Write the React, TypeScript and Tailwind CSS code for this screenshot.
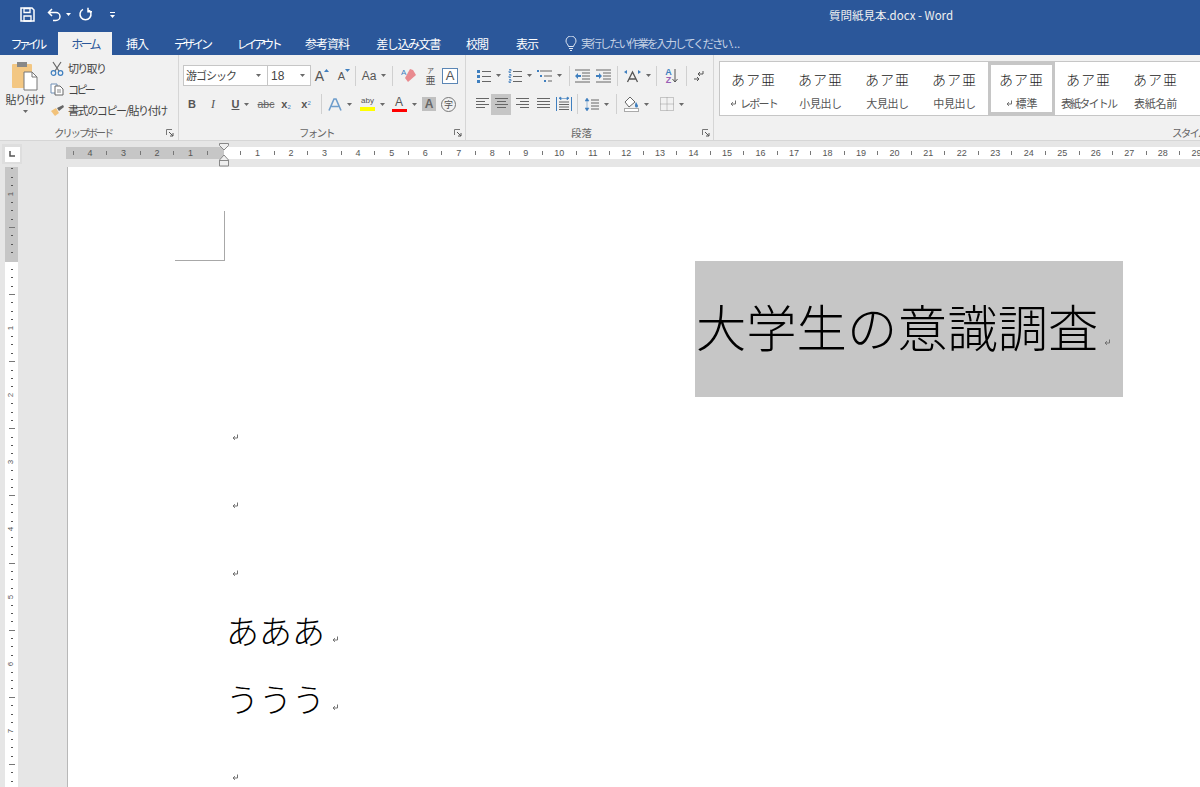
import React from "react";

const JP = "font-['Noto_Sans_CJK_JP',sans-serif]";
const B = "#3f7fbf";

const Caret = ({ c = "#6a6a6a" }: { c?: string }) => (
  <svg width="5" height="3" viewBox="0 0 5 3" className="flex-none"><path d="M0 0h5L2.5 3z" fill={c} /></svg>
);
const Sep = ({ h = "h-[20px]" }: { h?: string }) => <div className={`w-px flex-none bg-[#d0d0d0] ${h}`} />;

const Launcher = () => (
  <svg width="8" height="8" viewBox="0 0 8 8" className="flex-none">
    <path d="M.5 6V.5H6" fill="none" stroke="#777" />
    <path d="M3 3l4 4M7 4v3H4" fill="none" stroke="#555" />
  </svg>
);

const Lines = ({ rows }: { rows: [number, number][] }) => (
  <svg width="15" height="14" viewBox="0 0 15 14">
    {rows.map(([x, w], i) => (
      <rect key={i} x={x} y={1 + i * 3} width={w} height="1" fill="#666" />
    ))}
  </svg>
);

const Bullets = () => (
  <svg width="14" height="14" viewBox="0 0 14 14">
    {[2, 7, 12].map((y) => (
      <g key={y}>
        <rect x="0" y={y - 1} width="3" height="3" fill={B} />
        <rect x="5" y={y} width="9" height="1" fill="#666" />
      </g>
    ))}
  </svg>
);

const Numbers = () => (
  <svg width="14" height="14" viewBox="0 0 14 14">
    {[2, 7, 12].map((y) => (
      <g key={y}>
        <path d={`M1 ${y - 1.5}h2v1.500H1v1.500h2`} fill="none" stroke={B} strokeWidth=".8" />
        <rect x="5" y={y} width="9" height="1" fill="#666" />
      </g>
    ))}
  </svg>
);

const Multi = () => (
  <svg width="15" height="14" viewBox="0 0 15 14">
    <rect x="0" y="1" width="2" height="2" fill={B} />
    <rect x="3" y="1.500" width="12" height="1" fill="#666" />
    <rect x="3" y="6" width="2" height="2" fill={B} />
    <rect x="7" y="6.500" width="8" height="1" fill="#666" />
    <rect x="7" y="11" width="2" height="2" fill={B} />
    <rect x="11" y="11.500" width="4" height="1" fill="#666" />
  </svg>
);

const Indent = ({ flip }: { flip?: boolean }) => (
  <svg width="15" height="14" viewBox="0 0 15 14">
    <path d="M0 1h15M7 4h8M7 7h8M7 10h8M0 13h15" stroke="#666" />
    <path d={flip ? "M6 7 3 4v2H0v2h3v2z" : "M0 7l3-3v2h3v2H3v2z"} fill={B} />
  </svg>
);

const Txt = ({ c, cls }: { c: string; cls: string }) => (
  <span className={`font-['Liberation_Sans',sans-serif] leading-none ${cls}`}>{c}</span>
);

const Cell = ({ w, children }: { w: string; children?: React.ReactNode }) => (
  <div className={`flex flex-none items-center justify-center gap-[5px] ${w}`}>{children}</div>
);

function rulerSeq(n: number) {
  const items = [];
  for (let i = 1; i <= n; i++) {
    items.push(
      <div key={"t" + i} className="flex w-[16.77px] flex-none justify-center"><div className="h-[4px] w-px bg-[#777]" /></div>,
      <div key={"n" + i} className="flex w-[16.77px] flex-none justify-center font-['Liberation_Sans',sans-serif] text-[9px] leading-none text-[#555]">{i}</div>
    );
  }
  return items;
}

function vruler(k: number) {
  const m = ((k % 8) + 8) % 8;
  const num = Math.abs(k) / 8;
  return (
    <div key={k} className="flex h-[8.4px] flex-none items-center justify-center">
      {m === 0 ? (
        <span className="-rotate-90 font-['Liberation_Sans',sans-serif] text-[8px] leading-none text-[#555]">{num}</span>
      ) : m === 4 ? (
        <div className="h-px w-[6px] bg-[#777]" />
      ) : (
        <div className="h-px w-[2px] bg-[#555]" />
      )}
    </div>
  );
}

const Mark = () => (
  <svg width="7" height="7" viewBox="0 0 7 7" className="flex-none">
    <path d="M5.5 .5v3.5H1.2M3 2.2 1 4l2 1.8" fill="none" stroke="#707070" strokeWidth="1" />
  </svg>
);

const Tab = ({ w, t, active, track = "" }: { w: string; t: string; active?: boolean; track?: string }) => (
  <div className={`flex h-[23px] flex-none items-center justify-center text-[12px] ${w} ${track} ${active ? "bg-[#f1f1f1] text-[#2b579a]" : "text-white"}`}>{t}</div>
);

const Style = ({ t, sel, mark, track }: { t: string; sel?: boolean; mark?: boolean; track: string }) => (
  <div className={`flex h-[53px] w-[67px] flex-none flex-col items-center ${sel ? "border-[3px] border-[#c6c6c6] pt-[4px]" : "pt-[7px]"}`}>
    <div className="text-[14px] font-light leading-[20px] tracking-[1px] text-[#222]">あア亜</div>
    <div className={`mt-[6px] flex items-center gap-[3px] whitespace-nowrap text-[11px] leading-[16px] text-[#555] ${track}`}>
      {mark && <Mark />}
      {t}
    </div>
  </div>
);

export default function App() {
  return (
    <div className={`flex h-[787px] w-[1200px] flex-col overflow-hidden bg-[#e6e6e6] ${JP}`}>
      {/* title bar */}
      <div className="flex h-[32px] flex-none items-center bg-[#2b579a]">
        <div className="flex w-[582px] flex-none items-center pb-[3px] pl-[20px]">
          <svg width="15" height="15" viewBox="0 0 15 15"><path d="M1 1h11l2 2v11H1z" fill="none" stroke="#fff" strokeWidth="1.5" /><path d="M4 1.500h6v4H4zM4 9h7v5H4z" fill="none" stroke="#fff" strokeWidth="1.300" /></svg>
          <svg width="15" height="14" viewBox="0 0 15 14" className="ml-[12px]"><path d="M5 1 1.500 4.500 5 8M2 4.500h7a4 4 0 0 1 0 8H6" fill="none" stroke="#fff" strokeWidth="1.500" /></svg>
          <div className="ml-[4px]"><Caret c="#fff" /></div>
          <svg width="15" height="15" viewBox="0 0 15 15" className="ml-[7px]"><path d="M5 2.400a5.500 5.500 0 1 0 5 0M10 .8v4h4" fill="none" stroke="#fff" strokeWidth="1.500" /></svg>
          <svg width="5" height="6" viewBox="0 0 5 6" className="ml-[17px]"><path d="M0 .5h5" stroke="#fff" /><path d="M0 3h5L2.500 6z" fill="#fff" /></svg>
        </div>
        <div className="flex-1 text-center text-[11.5px] text-[#f0f0f0]">質問紙見本.docx - Word</div>
      </div>
      {/* tabs */}
      <div className="flex h-[23px] flex-none items-center bg-[#2b579a]">
        <Tab w="w-[54px]" t="ファイル" track="tracking-[-3.800px]" />
        <div className="w-[4px] flex-none" />
        <Tab w="w-[54px]" t="ホーム" active track="tracking-[-2.700px]" />
        <Tab w="w-[50px]" t="挿入" track="tracking-[-1px]" />
        <Tab w="w-[60px]" t="デザイン" track="tracking-[-3px]" />
        <Tab w="w-[72px]" t="レイアウト" track="tracking-[-3.500px]" />
        <Tab w="w-[66px]" t="参考資料" track="tracking-[-1px]" />
        <Tab w="w-[96px]" t="差し込み文書" track="tracking-[-1.400px]" />
        <Tab w="w-[42px]" t="校閲" track="tracking-[-1px]" />
        <Tab w="w-[58px]" t="表示" track="tracking-[-1px]" />
        <svg width="12" height="15" viewBox="0 0 12 15" className="ml-[9px]"><path d="M3.500 10.500C3 8 1 7.500 1 5a5 5 0 0 1 10 0c0 2.500-2 3-2.500 5.500zM4 12.500h4M5 14.500h2" fill="none" stroke="#dfe7f3" /></svg>
        <div className="ml-[4px] text-[11.5px] tracking-[-2.100px] text-[#c3d0e4]">実行したい作業を入力してください<span className="tracking-normal">...</span></div>
      </div>
      {/* ribbon */}
      <div className="flex h-[86px] flex-none border-b border-[#d6d6d6] bg-[#f1f1f1]">
        {/* clipboard */}
        <div className="flex w-[179px] flex-none flex-col border-r border-[#d6d6d6]">
          <div className="flex h-[70px] pt-[6px]">
            <div className="flex w-[50px] flex-none flex-col items-center">
              <svg width="28" height="30" viewBox="0 0 28 30">
                <rect x="1" y="3" width="20" height="24" rx="1" fill="#f3c783" />
                <rect x="6" y="1" width="10" height="5" fill="#888" />
                <path d="M13 11h8l5 5v13H13z" fill="#fff" stroke="#777" />
                <path d="M21 11v5h5" fill="none" stroke="#777" />
              </svg>
              <div className="mt-[1px] text-[11px] leading-[14px] tracking-[-1.200px] text-[#444]">貼り付け</div>
              <div className="mt-[4px]"><Caret /></div>
            </div>
            <div className="-mt-[3px] flex flex-col text-[11px] leading-[21px] text-[#444]">
              <div className="flex h-[21px] items-center gap-[4px]">
                <svg width="14" height="15" viewBox="0 0 14 15"><path d="M3 1l6 9M11 1 5 10" stroke="#666" strokeWidth="1.200" /><circle cx="3.500" cy="12" r="2.300" fill="none" stroke={B} strokeWidth="1.200" /><circle cx="10.500" cy="12" r="2.300" fill="none" stroke={B} strokeWidth="1.200" /></svg>
                <span className="tracking-[-1.700px]">切り取り</span>
              </div>
              <div className="flex h-[21px] items-center gap-[4px]">
                <svg width="14" height="13" viewBox="0 0 14 13"><path d="M1 1h6v9H1z" fill="#fff" stroke="#6f8fb5" /><path d="M5 3h5l3 3v6H5z" fill="#fff" stroke="#666" /><path d="M7 7h4M7 9h4" stroke="#888" /></svg>
                <span className="tracking-[-2.600px]">コピー</span>
              </div>
              <div className="flex h-[21px] items-center gap-[3px]">
                <svg width="15" height="13" viewBox="0 0 15 13"><path d="M1 7l5-3 3 5-4 3z" fill="#f2c27a" /><path d="M7 4l6-3 1 2-5 4z" fill="#666" /></svg>
                <span className="tracking-[-1.400px]">書式のコピー/貼り付け</span>
              </div>
            </div>
          </div>
          <div className="flex h-[15px] items-center">
            <div className="w-[54px] flex-none" />
            <div className="w-[112px] flex-none whitespace-nowrap text-[10.5px] tracking-[-2.200px] text-[#666]">クリップボード</div>
            <Launcher />
          </div>
        </div>
        {/* font */}
        <div className="flex w-[287px] flex-none flex-col border-r border-[#d6d6d6] pl-[4px]">
          <div className="mt-[10px] flex h-[21px] items-center">
            <div className="flex h-[21px] w-[85px] flex-none items-center justify-between border border-[#c6c6c6] bg-white px-[2px] pr-[6px] text-[11px] tracking-[-1px] text-[#444]">游ゴシック<Caret /></div>
            <div className="-ml-px flex h-[21px] w-[44px] flex-none items-center justify-between border border-[#c6c6c6] bg-white pl-[3px] pr-[5px] font-['Liberation_Sans',sans-serif] text-[12px] text-[#444]">18<Caret /></div>
            <Cell w="w-[22px]"><div className="flex items-start"><Txt c="A" cls="text-[14px] text-[#555]" /><svg width="5" height="3" viewBox="0 0 5 3"><path d="M0 3h5L2.500 0z" fill={B} /></svg></div></Cell>
            <Cell w="w-[22px]"><div className="flex items-start"><Txt c="A" cls="mt-[2px] text-[11px] text-[#555]" /><svg width="5" height="3" viewBox="0 0 5 3"><path d="M0 0h5L2.500 3z" fill={B} /></svg></div></Cell>
            <Sep />
            <Cell w="w-[36px]"><Txt c="Aa" cls="text-[12px] text-[#555]" /><Caret /></Cell>
            <Sep />
            <Cell w="w-[31px]">
              <svg width="16" height="15" viewBox="0 0 16 15"><path d="M9 1 4 10l3 4 8-7-3-5z" fill="#e98a8f" /><text x="0" y="7" fontSize="8" fill={B} fontFamily="Liberation Sans">A</text></svg>
            </Cell>
            <Cell w="w-[13px]">
              <div className="flex flex-col items-center text-[#555]"><span className="text-[7px] leading-[8px]">ア</span><span className="text-[10px] leading-[11px]">亜</span></div>
            </Cell>
            <div className="w-[5px] flex-none" />
            <div className="flex h-[16px] w-[16px] flex-none items-center justify-center border border-[#5b86b5] bg-white"><Txt c="A" cls="text-[13px] text-[#555]" /></div>
          </div>
          <div className="mt-[6px] flex h-[24px] items-center">
            <Cell w="w-[18px]"><Txt c="B" cls="text-[11px] font-bold text-[#555]" /></Cell>
            <Cell w="w-[24px]"><span className="font-['Liberation_Serif',serif] text-[12px] italic leading-none text-[#555]">I</span></Cell>
            <Cell w="w-[31px]"><Txt c="U" cls="text-[11px] font-bold text-[#555] underline" /><Caret /></Cell>
            <Cell w="w-[20px]"><Txt c="abc" cls="text-[10.5px] text-[#666] line-through" /></Cell>
            <Cell w="w-[20px]"><span className="font-['Liberation_Sans',sans-serif] text-[11px] font-bold leading-none text-[#555]">x<sub className="text-[6px] font-normal text-[#3f7fbf]">2</sub></span></Cell>
            <Cell w="w-[20px]"><span className="font-['Liberation_Sans',sans-serif] text-[11px] font-bold leading-none text-[#555]">x<sup className="text-[6px] font-normal text-[#3f7fbf]">2</sup></span></Cell>
            <div className="w-[5px] flex-none" />
            <Sep />
            <Cell w="w-[35px]">
              <svg width="14" height="15" viewBox="0 0 14 15"><path d="M1 13.500 6 2h2l5 11.500M3.500 9.500h7" fill="none" stroke="#6e9dcc" strokeWidth="1.600" /></svg>
              <Caret />
            </Cell>
            <Cell w="w-[31px]">
              <div className="flex w-[15px] flex-col items-center"><Txt c="aby" cls="text-[8px] text-[#555]" /><div className="mt-[2px] h-[4px] w-[15px] bg-[#ffff00]" /></div>
              <Caret />
            </Cell>
            <Cell w="w-[32px]">
              <div className="flex w-[15px] flex-col items-center"><Txt c="A" cls="text-[12px] text-[#555]" /><div className="mt-[1px] h-[3px] w-[15px] bg-[#ff0000]" /></div>
              <Caret />
            </Cell>
            <div className="ml-[2px] flex h-[14px] w-[14px] flex-none items-center justify-center bg-[#c0c0c0]"><Txt c="A" cls="text-[12px] font-bold text-[#666]" /></div>
            <div className="ml-[5px] flex h-[15px] w-[15px] flex-none items-center justify-center rounded-full border border-[#777] text-[9px] leading-none text-[#555]">字</div>
          </div>
          <div className="mt-[9px] flex h-[15px] items-center">
            <div className="w-[116px] flex-none" />
            <div className="w-[155px] flex-none whitespace-nowrap text-[10.5px] tracking-[-1.800px] text-[#666]">フォント</div>
            <Launcher />
          </div>
        </div>
        {/* paragraph */}
        <div className="flex w-[248px] flex-none flex-col border-r border-[#d6d6d6] pl-[7px]">
          <div className="mt-[10px] flex h-[21px] items-center">
            <Cell w="w-[31px]"><Bullets /><Caret /></Cell>
            <Cell w="w-[31px]"><Numbers /><Caret /></Cell>
            <Cell w="w-[29px]"><Multi /><Caret /></Cell>
            <div className="w-[5px] flex-none" />
            <Sep />
            <Cell w="w-[24px]"><Indent /></Cell>
            <Cell w="w-[19px]"><Indent flip /></Cell>
            <div className="w-[4px] flex-none" />
            <Sep />
            <Cell w="w-[38px]">
              <svg width="17" height="14" viewBox="0 0 17 14"><path d="M3.500 13 8.500 3l5 10M5.500 10h6" fill="none" stroke="#555" strokeWidth="1.300" /><path d="M0 3 3 1v4zM17 3l-3-2v4z" fill={B} /></svg>
              <Caret />
            </Cell>
            <Sep />
            <Cell w="w-[29px]">
              <div className="flex items-center">
                <div className="flex flex-col items-center font-['Liberation_Sans',sans-serif] text-[9px] font-bold leading-[8px]"><span className="text-[#3f7fbf]">A</span><span className="text-[#9a5fb5]">Z</span></div>
                <svg width="6" height="15" viewBox="0 0 6 15"><path d="M3 1v13M.5 11 3 14l2.500-3" fill="none" stroke="#555" /></svg>
              </div>
            </Cell>
            <Sep />
            <Cell w="w-[22px]">
              <svg width="11" height="12" viewBox="0 0 11 12"><path d="M10 1v3H5M7 2 5 4l2 2" fill="none" stroke="#555" /><path d="M1 9h5M4 7l2 2-2 2" fill="none" stroke="#555" /></svg>
            </Cell>
          </div>
          <div className="mt-[6px] flex h-[24px] items-center">
            <Cell w="w-[18px]"><Lines rows={[[1, 13], [1, 9], [1, 13], [1, 9]]} /></Cell>
            <div className="flex h-[21px] w-[20px] flex-none items-center justify-center bg-[#c6c6c6]"><Lines rows={[[1, 13], [3, 9], [1, 13], [3, 9]]} /></div>
            <Cell w="w-[22px]"><Lines rows={[[1, 13], [5, 9], [1, 13], [5, 9]]} /></Cell>
            <Cell w="w-[20px]"><Lines rows={[[1, 13], [1, 13], [1, 13], [1, 13]]} /></Cell>
            <Cell w="w-[21px]">
              <svg width="16" height="16" viewBox="0 0 16 16"><path d="M.5 1v14M15.500 1v14" stroke={B} /><path d="M3 2.500h10M3 2 5 1v3zM13 2l-2-1v3z" stroke={B} fill={B} strokeWidth=".6" /><path d="M3 6h10M3 8.500h10M3 11h10M3 13.500h10" stroke="#666" /></svg>
            </Cell>
            <div className="w-[3px] flex-none" />
            <Sep />
            <Cell w="w-[38px]">
              <svg width="14" height="15" viewBox="0 0 14 15"><path d="M2 2v11M0 4l2-3 2 3zM0 11l2 3 2-3z" fill={B} stroke={B} strokeWidth=".5" /><path d="M6 3h8M6 6h8M6 9h8M6 12h8" stroke="#666" /></svg>
              <Caret />
            </Cell>
            <Sep />
            <Cell w="w-[39px]">
              <svg width="15" height="16" viewBox="0 0 15 16"><path d="M6 1 1 6l4 5 6-5z" fill="#fff" stroke="#666" /><path d="M12 6c1 2 2 3 2 4a1.500 1.500 0 0 1-3 0c0-1 0-2 1-4z" fill={B} /><rect x=".5" y="12.500" width="14" height="3" fill="#fff" stroke="#aaa" /></svg>
              <Caret />
            </Cell>
            <Cell w="w-[31px]">
              <svg width="14" height="14" viewBox="0 0 14 14"><path d="M.5.500h13v13H.5zM7 .5v13M.5 7h13" fill="none" stroke="#999" strokeDasharray="1 1" /></svg>
              <Caret />
            </Cell>
          </div>
          <div className="mt-[9px] flex h-[15px] items-center">
            <div className="w-[98px] flex-none" />
            <div className="w-[131px] flex-none text-[10.5px] text-[#666]">段落</div>
            <Launcher />
          </div>
        </div>
        {/* styles */}
        <div className="flex flex-1 flex-col overflow-hidden pl-[5px]">
          <div className="mt-[6px] flex h-[55px] w-[500px] flex-none items-center border border-[#c6c6c6] bg-white">
            <Style t="レポート" mark track="tracking-[-1.800px]" />
            <Style t="小見出し" track="tracking-[-0.400px]" />
            <Style t="大見出し" track="tracking-[-0.400px]" />
            <Style t="中見出し" track="tracking-[-0.400px]" />
            <Style t="標準" sel mark track="tracking-[0px]" />
            <Style t="表紙タイトル" track="tracking-[-1.800px]" />
            <Style t="表紙名前" track="tracking-[-0.300px]" />
          </div>
          <div className="ml-[453px] mt-[9px] flex h-[15px] items-center whitespace-nowrap text-[10.5px] tracking-[-1.800px] text-[#666]">スタイル</div>
        </div>
      </div>
      {/* horizontal ruler row */}
      <div className="flex h-[26px] flex-none pt-[3px]">
        <div className="ml-[2px] flex h-[20px] w-[20px] flex-none items-center justify-center bg-[#dedede]">
          <div className="flex h-[15px] w-[15px] items-center justify-center bg-white">
            <svg width="6" height="6" viewBox="0 0 6 6"><path d="M1 0v5h5" fill="none" stroke="#555" strokeWidth="1.500" /></svg>
          </div>
        </div>
        <div className="ml-[44px] mt-[3px] flex h-[12px] w-[1134px] flex-none">
          <div className="relative flex h-[12px] w-[158px] flex-none flex-row-reverse items-center overflow-hidden bg-[#c6c6c6] pr-[8.380px]">
            <div className="flex flex-none flex-row-reverse items-center">{rulerSeq(5).slice(0, 9)}</div>
          </div>
          <div className="relative flex h-[12px] flex-1 items-center overflow-hidden bg-white pl-[8.380px]">
            {rulerSeq(29)}
          </div>
          <svg width="10" height="24" viewBox="0 0 10 24" className="absolute left-[219px] top-[143px]">
            <path d="M.5.500h9v2L5 7 .5 2.500z" fill="#eee" stroke="#888" />
            <path d="M5 12l4.500 5v6h-9v-6z" fill="#eee" stroke="#888" />
            <path d="M.5 17.500h9" stroke="#888" />
          </svg>
        </div>
      </div>
      {/* body */}
      <div className="flex min-h-0 flex-1">
        <div className="w-[67px] flex-none pl-[5px]">
          <div className="flex h-[620px] w-[13px] flex-col">
            <div className="flex h-[95px] flex-none flex-col justify-end overflow-hidden bg-[#c6c6c6] pb-[5.200px]">
              {[-11, -10, -9, -8, -7, -6, -5, -4, -3, -2, -1].map(vruler)}
            </div>
            <div className="flex flex-1 flex-col overflow-hidden bg-white pt-[3.200px]">
              {Array.from({ length: 62 }, (_, i) => vruler(i + 1))}
            </div>
          </div>
        </div>
        <div className="min-w-0 flex-1 overflow-hidden border-l border-[#b8b8b8] bg-white">
          <div className="ml-[107px] mt-[44px] h-[50px] w-[50px] border-b border-r border-[#a8a8a8]" />
          <div className="ml-[627px] flex h-[136px] w-[428px] items-center bg-[#c6c6c6] pl-[1px]">
            <span className="-mt-[7px] text-[50.300px] font-light leading-none text-black">大学生の意識調査</span>
            <div className="ml-[6px] mt-[26px]"><Mark /></div>
          </div>
          <div className="mt-[6px] flex h-[68px] items-center pl-[164px]"><Mark /></div>
          <div className="flex h-[68px] items-center pl-[164px]"><Mark /></div>
          <div className="flex h-[68px] items-center pl-[164px]"><Mark /></div>
          <div className="flex h-[68px] items-start pl-[158px]">
            <span className="-mt-[1px] text-[33px] font-light leading-[48px] text-black">あああ</span>
            <div className="ml-[7px] mt-[29px]"><Mark /></div>
          </div>
          <div className="flex h-[68px] items-start pl-[158px]">
            <span className="-mt-[1px] text-[33px] font-light leading-[48px] text-black">ううう</span>
            <div className="ml-[7px] mt-[29px]"><Mark /></div>
          </div>
          <div className="flex h-[68px] items-center pl-[164px]"><Mark /></div>
        </div>
      </div>
    </div>
  );
}
